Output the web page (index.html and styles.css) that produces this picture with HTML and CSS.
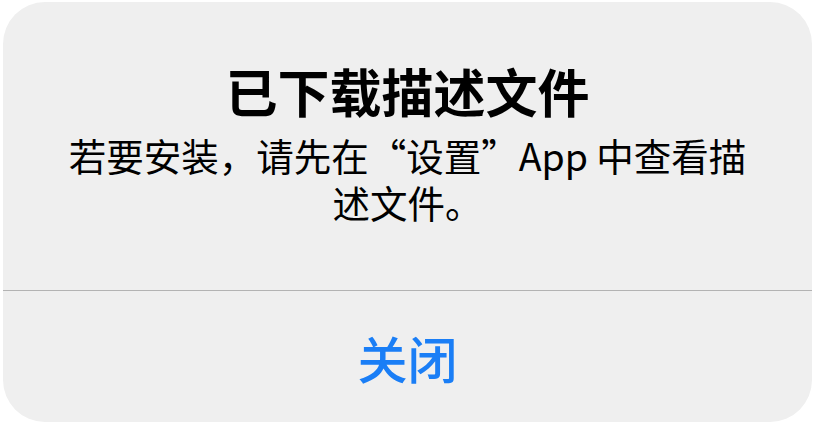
FILE: index.html
```html
<!DOCTYPE html>
<html lang="zh-CN">
<head>
  <meta charset="UTF-8">
  <meta name="viewport" content="width=device-width, initial-scale=1.0">
  <title>已下载描述文件</title>
  <link rel="stylesheet" href="styles.css">
</head>
<body>

<div class="alert">
  <div class="alert-content">
    <h1 class="alert-title">已下载描述文件</h1>
    <p class="alert-message">若要安装，请先在“设置”App 中查看描述文件。</p>
  </div>
  <button class="alert-button">关闭</button>
</div>

</body>
</html>
```

FILE: styles.css
```css
body {
  margin: 0;
  padding: 0;
  background: #fff;
  font-family: "Noto Sans CJK SC", "Noto Sans", sans-serif;
}

.alert {
  width: 809px;
  height: 420px;
  margin: 2px 0 0 3px;
  background-color: #efefef;
  border-radius: 42px;
  display: flex;
  flex-direction: column;
  overflow: hidden;
}

.alert-content {
  height: 289px;
  border-bottom: 1px solid #b3b3b3;
  display: flex;
  flex-direction: column;
  align-items: center;
  padding-top: 58px;
  box-sizing: border-box;
}

.alert-title {
  margin: 0;
  font-size: 52px;
  font-weight: 700;
  line-height: 62px;
  color: #000;
}

.alert-message {
  margin: 9px 0 0;
  width: 710px;
  font-size: 37.5px;
  line-height: 47px;
  text-align: center;
  color: #000;
}

.alert-button {
  flex: 1;
  border: none;
  background: none;
  font-family: inherit;
  font-size: 50px;
  font-weight: 500;
  color: #1a7ef6;
  padding: 0;
  cursor: pointer;
}
```
